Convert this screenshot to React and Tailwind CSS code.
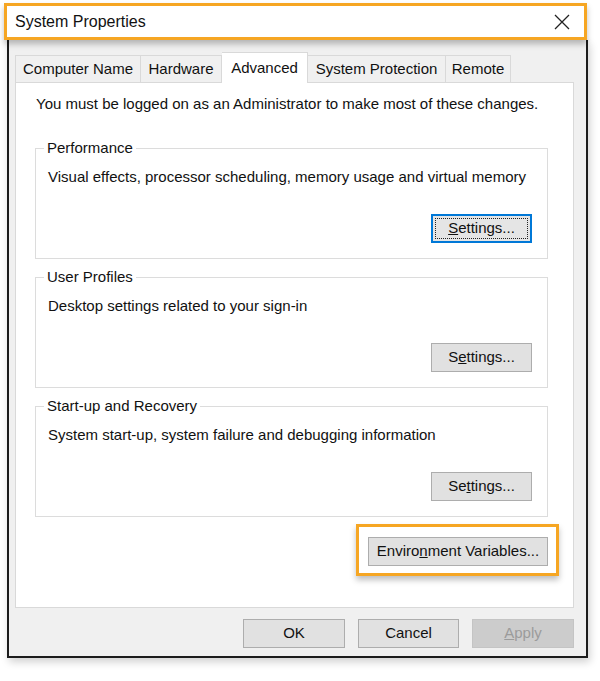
import React from "react";

function WinButton({ children, focused = false, disabled = false, className = "" }) {
  if (focused) {
    return (
      <div className={`h-[29px] border-2 border-[#0078d7] bg-[#e5e5e5] p-[2px] ${className}`}>
        <div className="h-full w-full border border-dotted border-[#222] flex items-center justify-center text-[15px] text-[#111]">
          {children}
        </div>
      </div>
    );
  }
  return (
    <div
      className={`h-[29px] border flex items-center justify-center text-[15px] ${
        disabled ? "border-[#c4c4c4] bg-[#cccccc] text-[#9b9b9b]" : "border-[#adadad] bg-[#e1e1e1] text-[#111]"
      } ${className}`}
    >
      {children}
    </div>
  );
}

function Group({ title, desc, button }) {
  return (
    <fieldset className="w-[513px] border border-[#dcdcdc] pl-[12px] pr-[15px] pb-[15px]">
      <legend className="ml-[-4px] px-[3px] text-[15px] leading-[20px] text-[#111]">{title}</legend>
      <div className="mt-[9px] text-[15px] leading-[20px] text-[#111]">{desc}</div>
      <div className="flex justify-end mt-[27px]">{button}</div>
    </fieldset>
  );
}

export default function App() {
  const font = { fontFamily: '"Liberation Sans", Arial, sans-serif' };
  return (
    <div className="w-[600px] h-[681px] bg-white overflow-hidden" style={font}>
      {/* Title bar highlight */}
      <div className="ml-[4px] mt-[3px] w-[583px] h-[37px] border-[3px] border-[#f6a623] bg-white flex items-center justify-between pl-[8px] pr-[14px] relative z-10 shadow-[0_4px_6px_rgba(0,0,0,0.25)]">
        <span className="text-[16px] text-[#111]">System Properties</span>
        <svg width="16" height="16" viewBox="0 0 16 16" className="text-[#222]">
          <path d="M1 1 L15 15 M15 1 L1 15" stroke="currentColor" strokeWidth="1.3" fill="none" />
        </svg>
      </div>

      {/* Window body */}
      <div className="ml-[7px] w-[581px] h-[618px] border-x-2 border-b-2 border-[#1c1c1c] bg-[#f0f0f0] flex flex-col shadow-[2px_4px_8px_rgba(0,0,0,0.18)]">
        {/* Tabs */}
        <div className="pl-[6px] pt-[12px] flex items-end relative z-10 -mb-px h-[43px] text-[15px] text-[#111]">
          <div className="h-[28px] w-[126px] border border-[#d9d9d9] border-b-0 flex items-center justify-center">Computer Name</div>
          <div className="h-[28px] w-[81px] border border-l-0 border-[#d9d9d9] border-b-0 flex items-center justify-center">Hardware</div>
          <div className="h-[31px] w-[86px] border border-l-0 border-[#d9d9d9] border-b-0 bg-white flex items-start pt-[4px] justify-center">Advanced</div>
          <div className="h-[28px] w-[138px] border border-l-0 border-[#d9d9d9] border-b-0 flex items-center justify-center">System Protection</div>
          <div className="h-[28px] w-[65px] border border-l-0 border-[#d9d9d9] border-b-0 flex items-center justify-center">Remote</div>
        </div>

        {/* Panel */}
        <div className="ml-[6px] w-[559px] h-[526px] border border-[#d9d9d9] bg-white pl-[19px] pt-[11px]">
          <div className="pl-[1px] text-[15px] leading-[20px] text-[#111]">
            You must be logged on as an Administrator to make most of these changes.
          </div>
          <div className="mt-[24px] flex flex-col gap-[8px]">
            <Group
              title="Performance"
              desc="Visual effects, processor scheduling, memory usage and virtual memory"
              button={
                <WinButton focused className="w-[101px]">
                  <span><span className="underline">S</span>ettings...</span>
                </WinButton>
              }
            />
            <Group
              title="User Profiles"
              desc="Desktop settings related to your sign-in"
              button={
                <WinButton className="w-[101px]">
                  <span>S<span className="underline">e</span>ttings...</span>
                </WinButton>
              }
            />
            <Group
              title="Start-up and Recovery"
              desc="System start-up, system failure and debugging information"
              button={
                <WinButton className="w-[101px]">
                  <span>Se<span className="underline">t</span>tings...</span>
                </WinButton>
              }
            />
          </div>
          <div className="flex justify-end pr-[14px] mt-[7px]">
            <div className="w-[203px] h-[52px] border-[3px] border-[#f6a623] bg-white pl-[9px] pt-[10px] shadow-[0_4px_6px_rgba(0,0,0,0.25)]">
              <WinButton className="w-[180px]">
                <span>Enviro<span className="underline">n</span>ment Variables...</span>
              </WinButton>
            </div>
          </div>
        </div>

        {/* Bottom buttons */}
        <div className="mt-[11px] flex justify-end pr-[12px] gap-[13px]">
          <WinButton className="w-[102px]">OK</WinButton>
          <WinButton className="w-[101px]">Cancel</WinButton>
          <WinButton disabled className="w-[102px]">
            <span><span className="underline">A</span>pply</span>
          </WinButton>
        </div>
      </div>
    </div>
  );
}
